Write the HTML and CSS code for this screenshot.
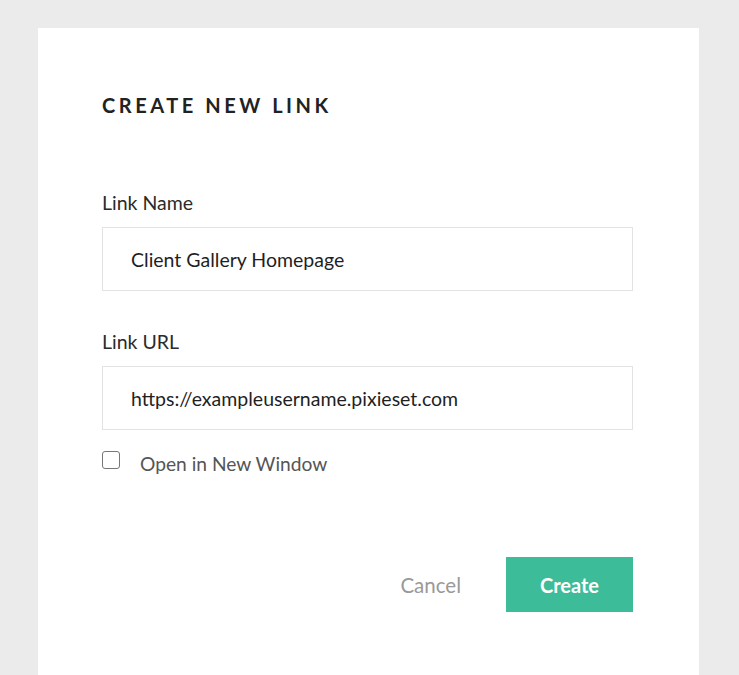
FILE: index.html
```html
<!DOCTYPE html>
<html lang="en">
<head>
<meta charset="utf-8">
<title>Create New Link</title>
<link rel="stylesheet" href="styles.css">
</head>
<body>
<div class="card">
  <h1 class="title">CREATE NEW LINK</h1>
  <div class="field field-first">
    <label class="label">Link Name</label>
    <div class="input">Client Gallery Homepage</div>
  </div>
  <div class="field">
    <label class="label">Link URL</label>
    <div class="input">https://exampleusername.pixieset.com</div>
  </div>
  <div class="check-row">
    <span class="checkbox"></span>
    <span class="check-label">Open in New Window</span>
  </div>
  <div class="actions">
    <span class="cancel">Cancel</span>
    <span class="create">Create</span>
  </div>
</div>
</body>
</html>
```

FILE: styles.css
```css
html, body {
  margin: 0;
  padding: 0;
  background: #ebebeb;
  height: 100%;
}
body {
  font-family: Lato, "Noto Sans", "Liberation Sans", sans-serif;
  color: #333;
  overflow: hidden;
}
.card {
  box-sizing: border-box;
  margin: 28px 0 0 38px;
  width: 661px;
  min-height: 647px;
  background: #fff;
  padding: 65px 66px 0 64px;
}
.title {
  margin: 0;
  font-size: 20px;
  line-height: 24px;
  font-weight: 700;
  letter-spacing: 3.55px;
  color: #222;
}
.field {
  display: flex;
  flex-direction: column;
  margin-top: 41px;
}
.field-first {
  margin-top: 76px;
}
.label {
  font-size: 19.5px;
  line-height: 20px;
  color: #2b2b2b;
  margin-bottom: 14px;
}
.input {
  box-sizing: border-box;
  height: 64px;
  border: 1px solid #e3e3e3;
  padding-left: 28px;
  display: flex;
  align-items: center;
  font-size: 19.5px;
  color: #1f1f1f;
}
.check-row {
  display: flex;
  align-items: center;
  margin-top: 20px;
  height: 20px;
}
.checkbox {
  box-sizing: border-box;
  width: 18px;
  height: 18px;
  border: 1.5px solid #777;
  border-radius: 3px;
  margin-right: 20px;
}
.check-label {
  font-size: 19.2px;
  line-height: 20px;
  color: #555;
  margin-top: 7px;
}
.actions {
  display: flex;
  justify-content: flex-end;
  align-items: center;
  margin-top: 87px;
}
.cancel {
  font-size: 20.5px;
  color: #999;
  margin-right: 45px;
}
.create {
  width: 127px;
  height: 55px;
  background: #3dbc9a;
  color: #fff;
  font-size: 20px;
  font-weight: 700;
  display: flex;
  align-items: center;
  justify-content: center;
}
```
